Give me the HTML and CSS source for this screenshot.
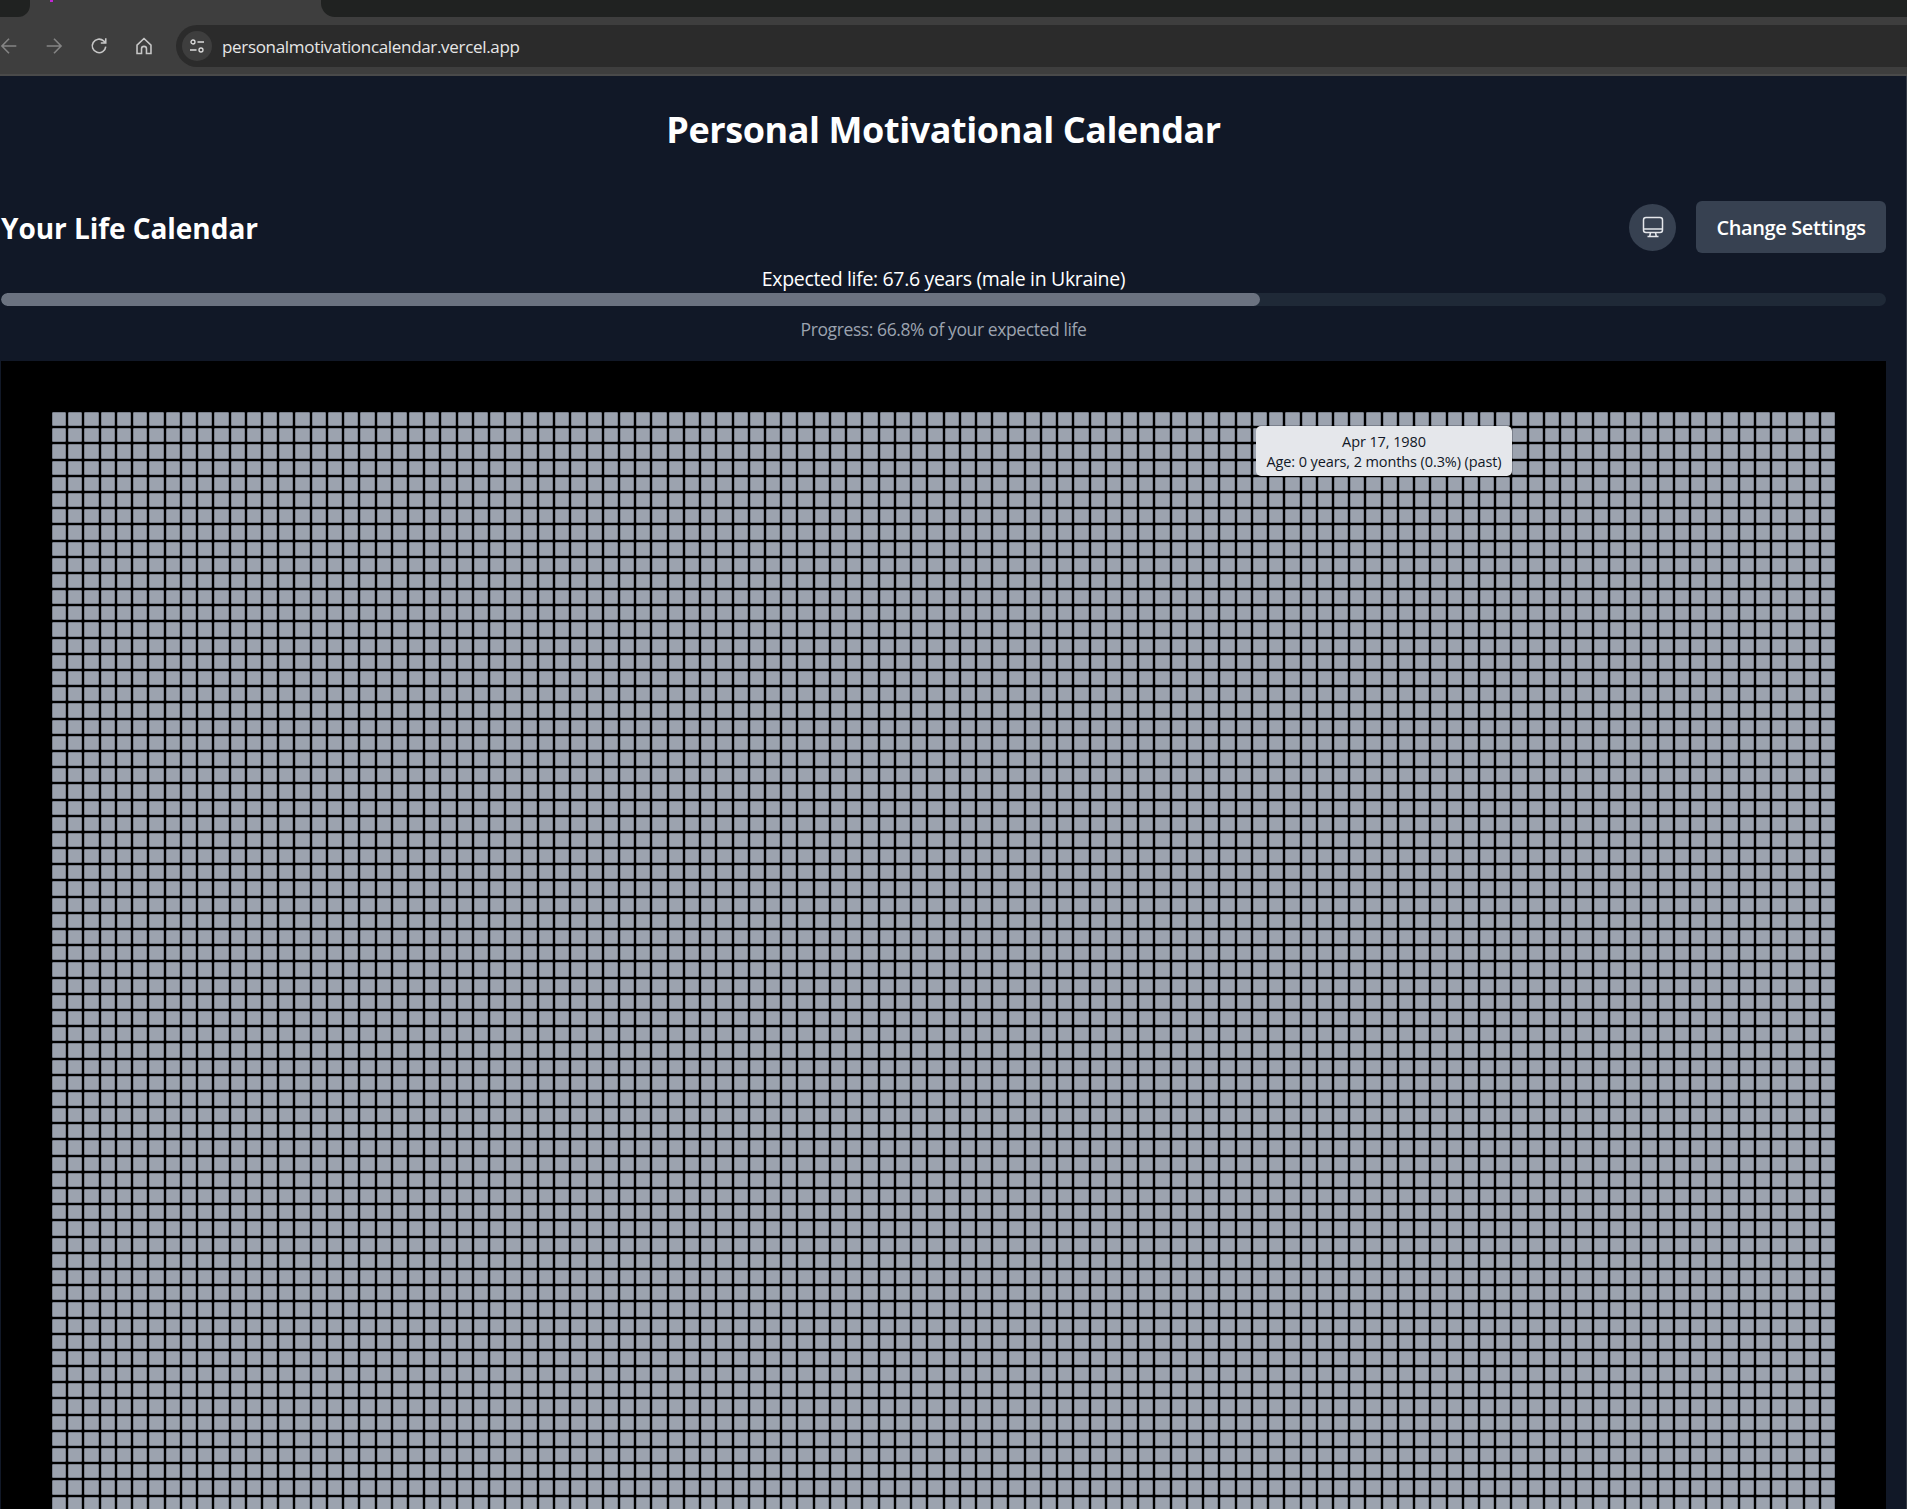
FILE: index.html
```html
<!DOCTYPE html>
<html lang="en">
<head>
  <meta charset="UTF-8" />
  <meta name="viewport" content="width=device-width, initial-scale=1.0"/>
  <title>Personal Motivational Calendar</title>
  <link rel="stylesheet" href="styles.css">
</head>
<body>
  <div class="tabStrip">
    <div class="tabStub"></div>
    <div class="tabDot"></div>
    <div class="tabRest"></div>
  </div>
  <div class="toolbar">
    <svg class="navIcon dim" viewBox="0 0 16 16"><path d="M14.5 8H2M8 1.5 1.7 8 8 14.5"/></svg>
    <svg class="navIcon dim" viewBox="0 0 16 16"><path d="M1.5 8H14M8 1.5 14.3 8 8 14.5"/></svg>
    <svg class="navIcon" viewBox="0 0 16 16"><path d="M14 8.5a6 6 0 1 1-1.900-5L14 5.400M14 1v4.400H9.600"/></svg>
    <svg class="navIcon" viewBox="0 0 16 16"><path d="M1.800 7.200 8 1.300l6.200 5.900V14.700H10.200V10.500a2.200 2.200 0 0 0-4.400 0V14.700H1.800z"/></svg>
    <div class="urlBar">
      <div class="siteInfo">
        <svg viewBox="0 0 16 16"><circle cx="4" cy="4" r="2"/><path d="M8.500 4H15M1 12h6.500"/><circle cx="12" cy="12" r="2"/></svg>
      </div>
      <span class="urlText">personalmotivationcalendar.vercel.app</span>
    </div>
  </div>
  <div class="toolbarEdge"></div>

  <main class="page">
    <h1 class="appTitle">Personal Motivational Calendar</h1>

    <div class="calendarHeader">
      <h2 class="calendarTitle">Your Life Calendar</h2>
      <div class="headerActions">
        <button class="themeButton" aria-label="Theme">
          <svg viewBox="0 0 24 24"><rect x="2.500" y="2.500" width="19" height="15" rx="2.500"/><path d="M2.500 14h19M9.500 17.500l-.7 3.500M14.500 17.500l.7 3.500M6.500 21.500h11"/></svg>
        </button>
        <button class="settingsButton">Change Settings</button>
      </div>
    </div>

    <div class="lifeStats">
      <div class="expected">Expected life: 67.6 years (male in Ukraine)</div>
      <div class="progressTrack"><div class="progressFill" style="width: 66.8%"></div></div>
      <div class="progressText">Progress: 66.8% of your expected life</div>
    </div>

    <div class="gridPanel">
      <div class="calendarGrid" id="calendarGrid"></div>
      <div class="cellTooltip">
        <div>Apr 17, 1980</div>
        <div>Age: 0 years, 2 months (0.3%) (past)</div>
      </div>
    </div>
  </main>

  <script src="calendar.js"></script>
</body>
</html>
```

FILE: styles.css
```css
* {
  box-sizing: border-box;
}

html, body {
  height: 100%;
}

body {
  margin: 0;
  height: 1509px;
  overflow: hidden;
  display: flex;
  flex-direction: column;
  background-color: #111827;
  font-family: "Open Sans", "Noto Sans", sans-serif;
}

/* browser chrome */
.tabStrip {
  position: relative;
  flex: none;
  display: flex;
  justify-content: space-between;
  height: 17px;
  background-color: #3e3e3e;
}

.tabStub {
  width: 30px;
  background-color: #202221;
  border-bottom-right-radius: 12px;
}

.tabDot {
  position: absolute;
  left: 50px;
  top: 0;
  width: 3px;
  height: 2px;
  background-color: #c026d3;
}

.tabRest {
  width: 1586px;
  background-color: #202221;
  border-bottom-left-radius: 14px;
}

.toolbar {
  flex: none;
  display: flex;
  align-items: center;
  height: 57px;
  padding: 8px 0 7px 0;
  background-color: #3e3e3e;
}

.navIcon {
  flex: none;
  width: 18px;
  height: 18px;
  margin-left: 27px;
  fill: none;
  stroke: #c7c7c7;
  stroke-width: 1.4;
}

.navIcon:first-child {
  margin-left: 0;
}

.navIcon.dim {
  stroke: #858585;
}

.urlBar {
  flex: 1;
  display: flex;
  align-items: center;
  height: 42px;
  margin-left: 23px;
  padding-left: 6px;
  background-color: #2b2b2b;
  border-radius: 21px 0 0 21px;
}

.siteInfo {
  display: flex;
  justify-content: center;
  align-items: center;
  width: 30px;
  height: 30px;
  border-radius: 50%;
  background-color: #3e3e3e;
}

.siteInfo svg {
  width: 16px;
  height: 16px;
  fill: none;
  stroke: #dcdcdc;
  stroke-width: 1.3;
}

.urlText {
  margin-left: 10px;
  color: #e6e6e6;
  font-size: 17px;
  letter-spacing: -0.32px;
}

.toolbarEdge {
  flex: none;
  height: 2px;
  background-color: #4a4a4a;
}

/* page */
.page {
  flex: 1;
  min-height: 0;
  display: flex;
  flex-direction: column;
  padding: 0 20px 0 1px;
  border-right: 1px solid #343a44;
  color: #fff;
}

.appTitle {
  margin: 32px 0 0 0;
  font-size: 36px;
  line-height: 44px;
  font-weight: 700;
  letter-spacing: -0.43px;
  text-align: center;
}

.calendarHeader {
  display: flex;
  justify-content: space-between;
  align-items: center;
  margin-top: 49px;
}

.calendarTitle {
  margin: 2px 0 0 0;
  font-size: 28px;
  font-weight: 700;
  letter-spacing: -0.05px;
}

.headerActions {
  display: flex;
  align-items: center;
  gap: 20px;
}

.themeButton {
  display: flex;
  justify-content: center;
  align-items: center;
  width: 47px;
  height: 47px;
  padding: 0;
  border: none;
  border-radius: 50%;
  background-color: #374151;
}

.themeButton svg {
  width: 24px;
  height: 24px;
  fill: none;
  stroke: #e5e7eb;
  stroke-width: 1.5;
}

.settingsButton {
  width: 190px;
  height: 52px;
  padding: 0;
  border: none;
  border-radius: 6px;
  background-color: #374151;
  color: #fff;
  font-family: inherit;
  font-size: 20px;
  font-weight: 600;
  letter-spacing: -0.4px;
}

.lifeStats {
  margin-top: 13px;
  text-align: center;
}

.expected {
  margin-bottom: 1px;
  font-size: 19.5px;
  line-height: 26px;
  letter-spacing: -0.33px;
}

.progressTrack {
  height: 13px;
  border-radius: 7px;
  background-color: #1f2937;
  overflow: hidden;
}

.progressFill {
  height: 100%;
  border-radius: 7px;
  background-color: #6b7280;
}

.progressText {
  margin-top: 11px;
  color: #9ca3af;
  font-size: 17.5px;
  line-height: 24px;
  letter-spacing: -0.4px;
}

.gridPanel {
  position: relative;
  flex: 1;
  min-height: 0;
  overflow: hidden;
  margin-top: 20px;
  padding: 51px 51px 0 51px;
  background-color: #000;
}

.calendarGrid {
  display: grid;
  grid-template-columns: repeat(110, 1fr);
  grid-auto-rows: 14.2px;
  gap: 2px;
}

.calendarCell {
  background-color: #9ca3af;
  border: 1px solid #7a808c;
  border-radius: 1px;
}

.cellTooltip {
  position: absolute;
  left: 1255px;
  top: 65px;
  width: 256px;
  height: 50px;
  display: flex;
  flex-direction: column;
  justify-content: center;
  padding-top: 1px;
  border-radius: 5px;
  background-color: #e5e7eb;
  color: #111827;
  font-size: 14.5px;
  line-height: 20px;
  letter-spacing: -0.1px;
  text-align: center;
  white-space: nowrap;
}
```

FILE: calendar.js
```js
// one cell per month, 110 to a row
const grid = document.getElementById("calendarGrid");
const totalCells = 110 * 68;

for (let i = 0; i < totalCells; i++) {
  const cell = document.createElement("div");
  cell.className = "calendarCell";
  grid.appendChild(cell);
}
```
